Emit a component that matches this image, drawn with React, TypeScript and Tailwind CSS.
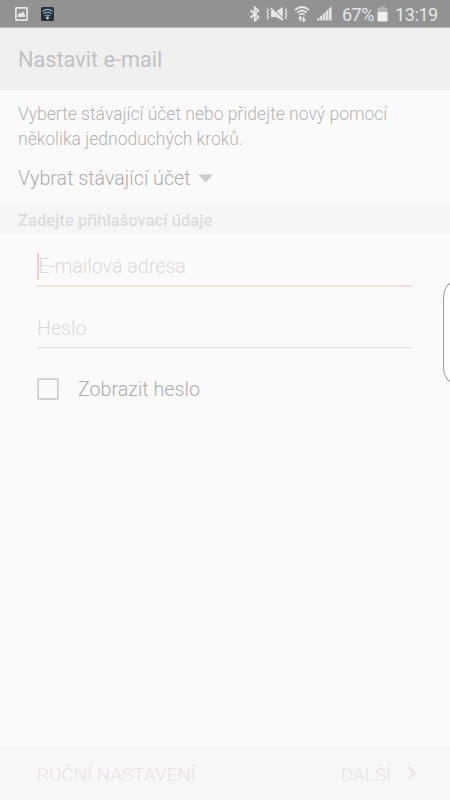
const BluetoothIcon = () => (
  <svg width="12" height="16" viewBox="0 0 12 16" fill="none" stroke="#e6e6e6" strokeWidth="1.8">
    <path d="M1.5 4.2 L9.5 11.2 L5.8 14.6 V1.4 L9.5 4.8 L1.5 11.8" />
  </svg>
);

const VibrateIcon = () => (
  <svg width="22" height="16" viewBox="0 0 22 16" fill="none" stroke="#e6e6e6">
    <path d="M1 2.5 l1.5 1.8 -1.5 1.8 1.5 1.8 -1.5 1.8 1.5 1.8 -1.5 1.8" strokeWidth="1.1" />
    <path d="M20.8 2.5 l-1.5 1.8 1.5 1.8 -1.5 1.8 1.5 1.8 -1.5 1.8 1.5 1.8" strokeWidth="1.1" />
    <path d="M5 5 H10.5 L16.8 1 V15 L10.5 11 H5 Z" fill="#e6e6e6" stroke="none" />
    <path d="M5.8 1.7 L18 13.2" stroke="#929292" strokeWidth="1.3" />
    <path d="M4.6 2.1 L17 13.8" strokeWidth="1.6" />
  </svg>
);

const WifiIcon = () => (
  <svg width="16" height="18" viewBox="0 0 16 18" fill="none" stroke="#e6e6e6" strokeWidth="1.7">
    <path d="M1 5.2 Q8 -1.2 15 5.2" />
    <path d="M3.2 7.8 Q8 3.2 12.8 7.8" />
    <path d="M5.3 10 Q8 7.4 10.7 10" />
    <path d="M6.3 16.3 V12 M4.5 13.8 L6.3 11.8 L7.8 13.6" strokeWidth="1.3" />
    <path d="M9.7 11.8 V16 M8.2 14.3 L9.7 16.2 L11.5 14.3" strokeWidth="1.3" />
  </svg>
);

const SignalIcon = () => (
  <svg width="15" height="15" viewBox="0 0 15 15" fill="#e6e6e6">
    <path d="M0 14.5 V13.3 L2.5 11.2 V14.5 Z" />
    <path d="M3.1 14.5 V10.7 L5.5 8.5 V14.5 Z" />
    <path d="M6.1 14.5 V8 L8.5 5.8 V14.5 Z" />
    <path d="M9.1 14.5 V5.2 L11.5 3 V14.5 Z" />
    <path d="M12.1 14.5 V2.4 L14.6 0.2 V14.5 Z" />
  </svg>
);

const BatteryIcon = () => (
  <svg width="11" height="16" viewBox="0 0 11 16">
    <path d="M3 0.5 H8 V2 H10.5 V6 H0.5 V2 H3 Z" fill="#b4b4b4" />
    <rect x="0.5" y="6" width="10" height="9.5" fill="#eeeeee" />
  </svg>
);

const StatusBar = () => (
  <div className="flex h-[28px] items-center border-b border-[#b5b5b5] bg-[#929292] text-[#e6e6e6]">
    <svg className="ml-[15px]" width="13" height="14" viewBox="0 0 13 14">
      <rect x="0.9" y="0.9" width="11.2" height="12.2" rx="0.6" fill="none" stroke="#e8e8e8" strokeWidth="1.7" />
      <path d="M2.8 10 V7.8 L4.8 5.5 L6 6.7 L8 4.5 L10.2 7.8 V10 Z" fill="#e8e8e8" />
    </svg>
    <svg className="ml-[13px]" width="13" height="14" viewBox="0 0 13 14" fill="none">
      <rect width="13" height="14" rx="1.5" fill="#26323b" />
      <path d="M1.4 4.5 Q6.5 0.3 11.6 4.5 M2.6 6.8 Q6.5 3.5 10.4 6.8 M4 9 Q6.5 7 9 9" stroke="#7fb2c8" strokeWidth="1.2" />
      <circle cx="6.5" cy="11" r="1.4" fill="#c3d4dc" />
    </svg>
    <div className="ml-auto flex items-center pr-[12px]">
      <BluetoothIcon />
      <div className="ml-[5px] flex"><VibrateIcon /></div>
      <div className="ml-[6px] flex"><WifiIcon /></div>
      <div className="ml-[7px] flex"><SignalIcon /></div>
      <span className="ml-[10px] w-[32px] pt-[2px] text-[18px] leading-[28px] tracking-[-0.5px] whitespace-nowrap">67%</span>
      <div className="ml-[3px] flex"><BatteryIcon /></div>
      <span className="ml-[7px] w-[43px] pt-[2px] text-[18px] leading-[28px] tracking-[-0.4px] whitespace-nowrap">13:19</span>
    </div>
  </div>
);

const App = () => {
  return (
    <div className="relative flex h-[800px] w-[450px] flex-col overflow-hidden bg-[#fafafa] font-['Roboto','Noto_Sans',sans-serif]">
      <StatusBar />

      <header className="flex h-[62px] items-center bg-[#f0f0f0] pt-[2px] pl-[18px]">
        <h1 className="text-[21.7px] text-[#c0c0c0]">Nastavit e-mail</h1>
      </header>

      <main className="flex grow flex-col">
        <p className="pt-[12px] pl-[18px] text-[17.53px] leading-[25px] font-light whitespace-nowrap text-[#b4b4b4]">
          Vyberte stávající účet nebo přidejte nový pomocí
          <br />
          několika jednoduchých kroků.
        </p>

        {/* Account picker */}
        <button className="mt-[11px] flex h-[30px] items-center pl-[18px] text-[19.7px] font-light text-[#acacac]">
          <span className="pt-[2px]">Vybrat stávající účet</span>
          <svg className="ml-[7px]" width="15" height="9" viewBox="0 0 15 9">
            <path d="M0 0.5 H15 L7.5 8.5 Z" fill="#cccccc" />
          </svg>
        </button>

        <h2 className="mt-[11px] flex h-[31px] items-center bg-[#f6f6f6] pt-[3px] pl-[18px] text-[16.6px] font-medium text-[#dcdcdc]">
          Zadejte přihlašovací údaje
        </h2>

        <form className="flex flex-col pr-[37px] pl-[37px]">
          <div className="flex h-[52px] items-center border-b-2 border-[#f8dfda] pt-[12px] text-[19.7px] font-light text-[#dadada]">
            <span className="-mr-[1px] h-[27px] w-[2px] bg-[#f4cfc9]" />
            <span className="pt-[2px]">E-mailová adresa</span>
          </div>
          <div className="flex h-[61px] items-center border-b border-[#e3e3e3] pt-[24px] text-[19.7px] font-light text-[#dadada]">
            Heslo
          </div>
          <label className="mt-[29px] flex h-[24px] items-center text-[19.7px] font-light text-[#acacac]">
            <span className="h-[22px] w-[22px] rounded-[2px] border-2 border-[#d2d2d2]" />
            <span className="ml-[19px] pt-[2px]">Zobrazit heslo</span>
          </label>
        </form>
      </main>

      <footer className="flex h-[53px] items-center justify-between bg-[#f7f7f7] pr-[33px] pl-[37px] text-[18.9px] font-light text-[#eae4e4]">
        <span className="pt-[3px]">RUČNÍ NASTAVENÍ</span>
        <span className="flex items-center">
          <span className="pt-[3px]">DALŠÍ</span>
          <svg className="ml-[16px]" width="10" height="16" viewBox="0 0 10 16" fill="none" stroke="#eee6e6" strokeWidth="2.2">
            <path d="M1.5 2 L7.7 8 L1.5 14" />
          </svg>
        </span>
      </footer>

      {/* Edge panel handle */}
      <div className="absolute top-[283px] -right-[12px] h-[99px] w-[19px] rounded-[8px/16px] border border-[#9a9a9a] bg-white" />
    </div>
  );
};

export default App;
